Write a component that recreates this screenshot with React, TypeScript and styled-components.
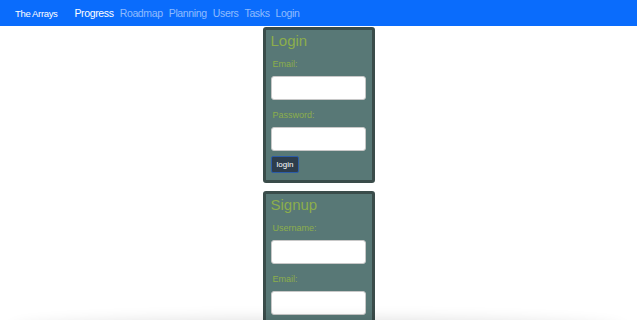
import styled, {createGlobalStyle} from 'styled-components';

const GlobalStyle = createGlobalStyle`
    html, body {
        margin: 0;
        padding: 0;
        background: #fff;
        font-family: "Liberation Sans", Arial, sans-serif;
    }
`;

const NavBar = styled.nav`
    display: flex;
    align-items: center;
    height: 26px;
    width: 637px;
    background-color: #0a6cfc;
    padding: 0 15px;
    box-sizing: border-box;
`;

const Brand = styled.span`
    color: #fff;
    font-size: 9.5px;
    letter-spacing: -0.35px;
    margin-right: 17px;
`;

const NavLinks = styled.div`
    display: flex;
    gap: 6px;
`;

const NavLink = styled.a<{ $active?: boolean }>`
    color: ${p => p.$active ? '#fff' : 'rgba(255, 255, 255, 0.55)'};
    font-size: 10.5px;
    letter-spacing: -0.35px;
    text-decoration: none;
`;

const Page = styled.main`
    display: flex;
    flex-direction: column;
    align-items: center;
    gap: 8px;
    margin-top: 1px;
    padding-right: 3px;
`;

const Card = styled.form`
    width: 112px;
    box-sizing: border-box;
    background-color: #587876;
    border: 3px solid #3a4c4a;
    border-radius: 3px;
    padding: 2px 5px 7px;
    display: flex;
    flex-direction: column;
`;

const CardTitle = styled.h2`
    margin: 0 0 9px 0;
    font-size: 15px;
    font-weight: normal;
    color: #8cae4c;
`;

const Label = styled.label`
    font-size: 9px;
    color: #8cae4c;
    margin: 1px 0 7px 2px;
`;

const Input = styled.input`
    width: 95px;
    height: 24px;
    box-sizing: border-box;
    border: 1px solid #c8c8c8;
    border-radius: 3px;
    background: #fff;
    margin-bottom: 9px;
`;

const Button = styled.button`
    align-self: flex-start;
    margin-top: -4px;
    height: 17px;
    padding: 0 5px;
    font-size: 8px;
    font-family: inherit;
    color: #fff;
    background: #2d3d4c;
    border: 1px solid #2b5ca8;
    border-radius: 2px;
`;

const BottomShade = styled.div`
    position: fixed;
    left: 10px;
    right: 15px;
    bottom: -24px;
    height: 24px;
    border-radius: 50%;
    box-shadow: 0 0 16px rgba(0, 0, 0, 0.14);
    background: #fff;
`;

const links = ['Roadmap', 'Planning', 'Users', 'Tasks', 'Login'];

export default function App() {
    return (
        <>
            <GlobalStyle/>
            <NavBar>
                <Brand>The Arrays</Brand>
                <NavLinks>
                    <NavLink $active>Progress</NavLink>
                    {links.map(l => <NavLink key={l}>{l}</NavLink>)}
                </NavLinks>
            </NavBar>
            <Page>
                <Card>
                    <CardTitle>Login</CardTitle>
                    <Label>Email:</Label>
                    <Input/>
                    <Label>Password:</Label>
                    <Input type="password"/>
                    <Button type="button">login</Button>
                </Card>
                <Card>
                    <CardTitle>Signup</CardTitle>
                    <Label>Username:</Label>
                    <Input/>
                    <Label>Email:</Label>
                    <Input/>
                    <Label>Password:</Label>
                    <Input type="password"/>
                    <Button type="button">signup</Button>
                </Card>
            </Page>
            <BottomShade/>
        </>
    );
}
